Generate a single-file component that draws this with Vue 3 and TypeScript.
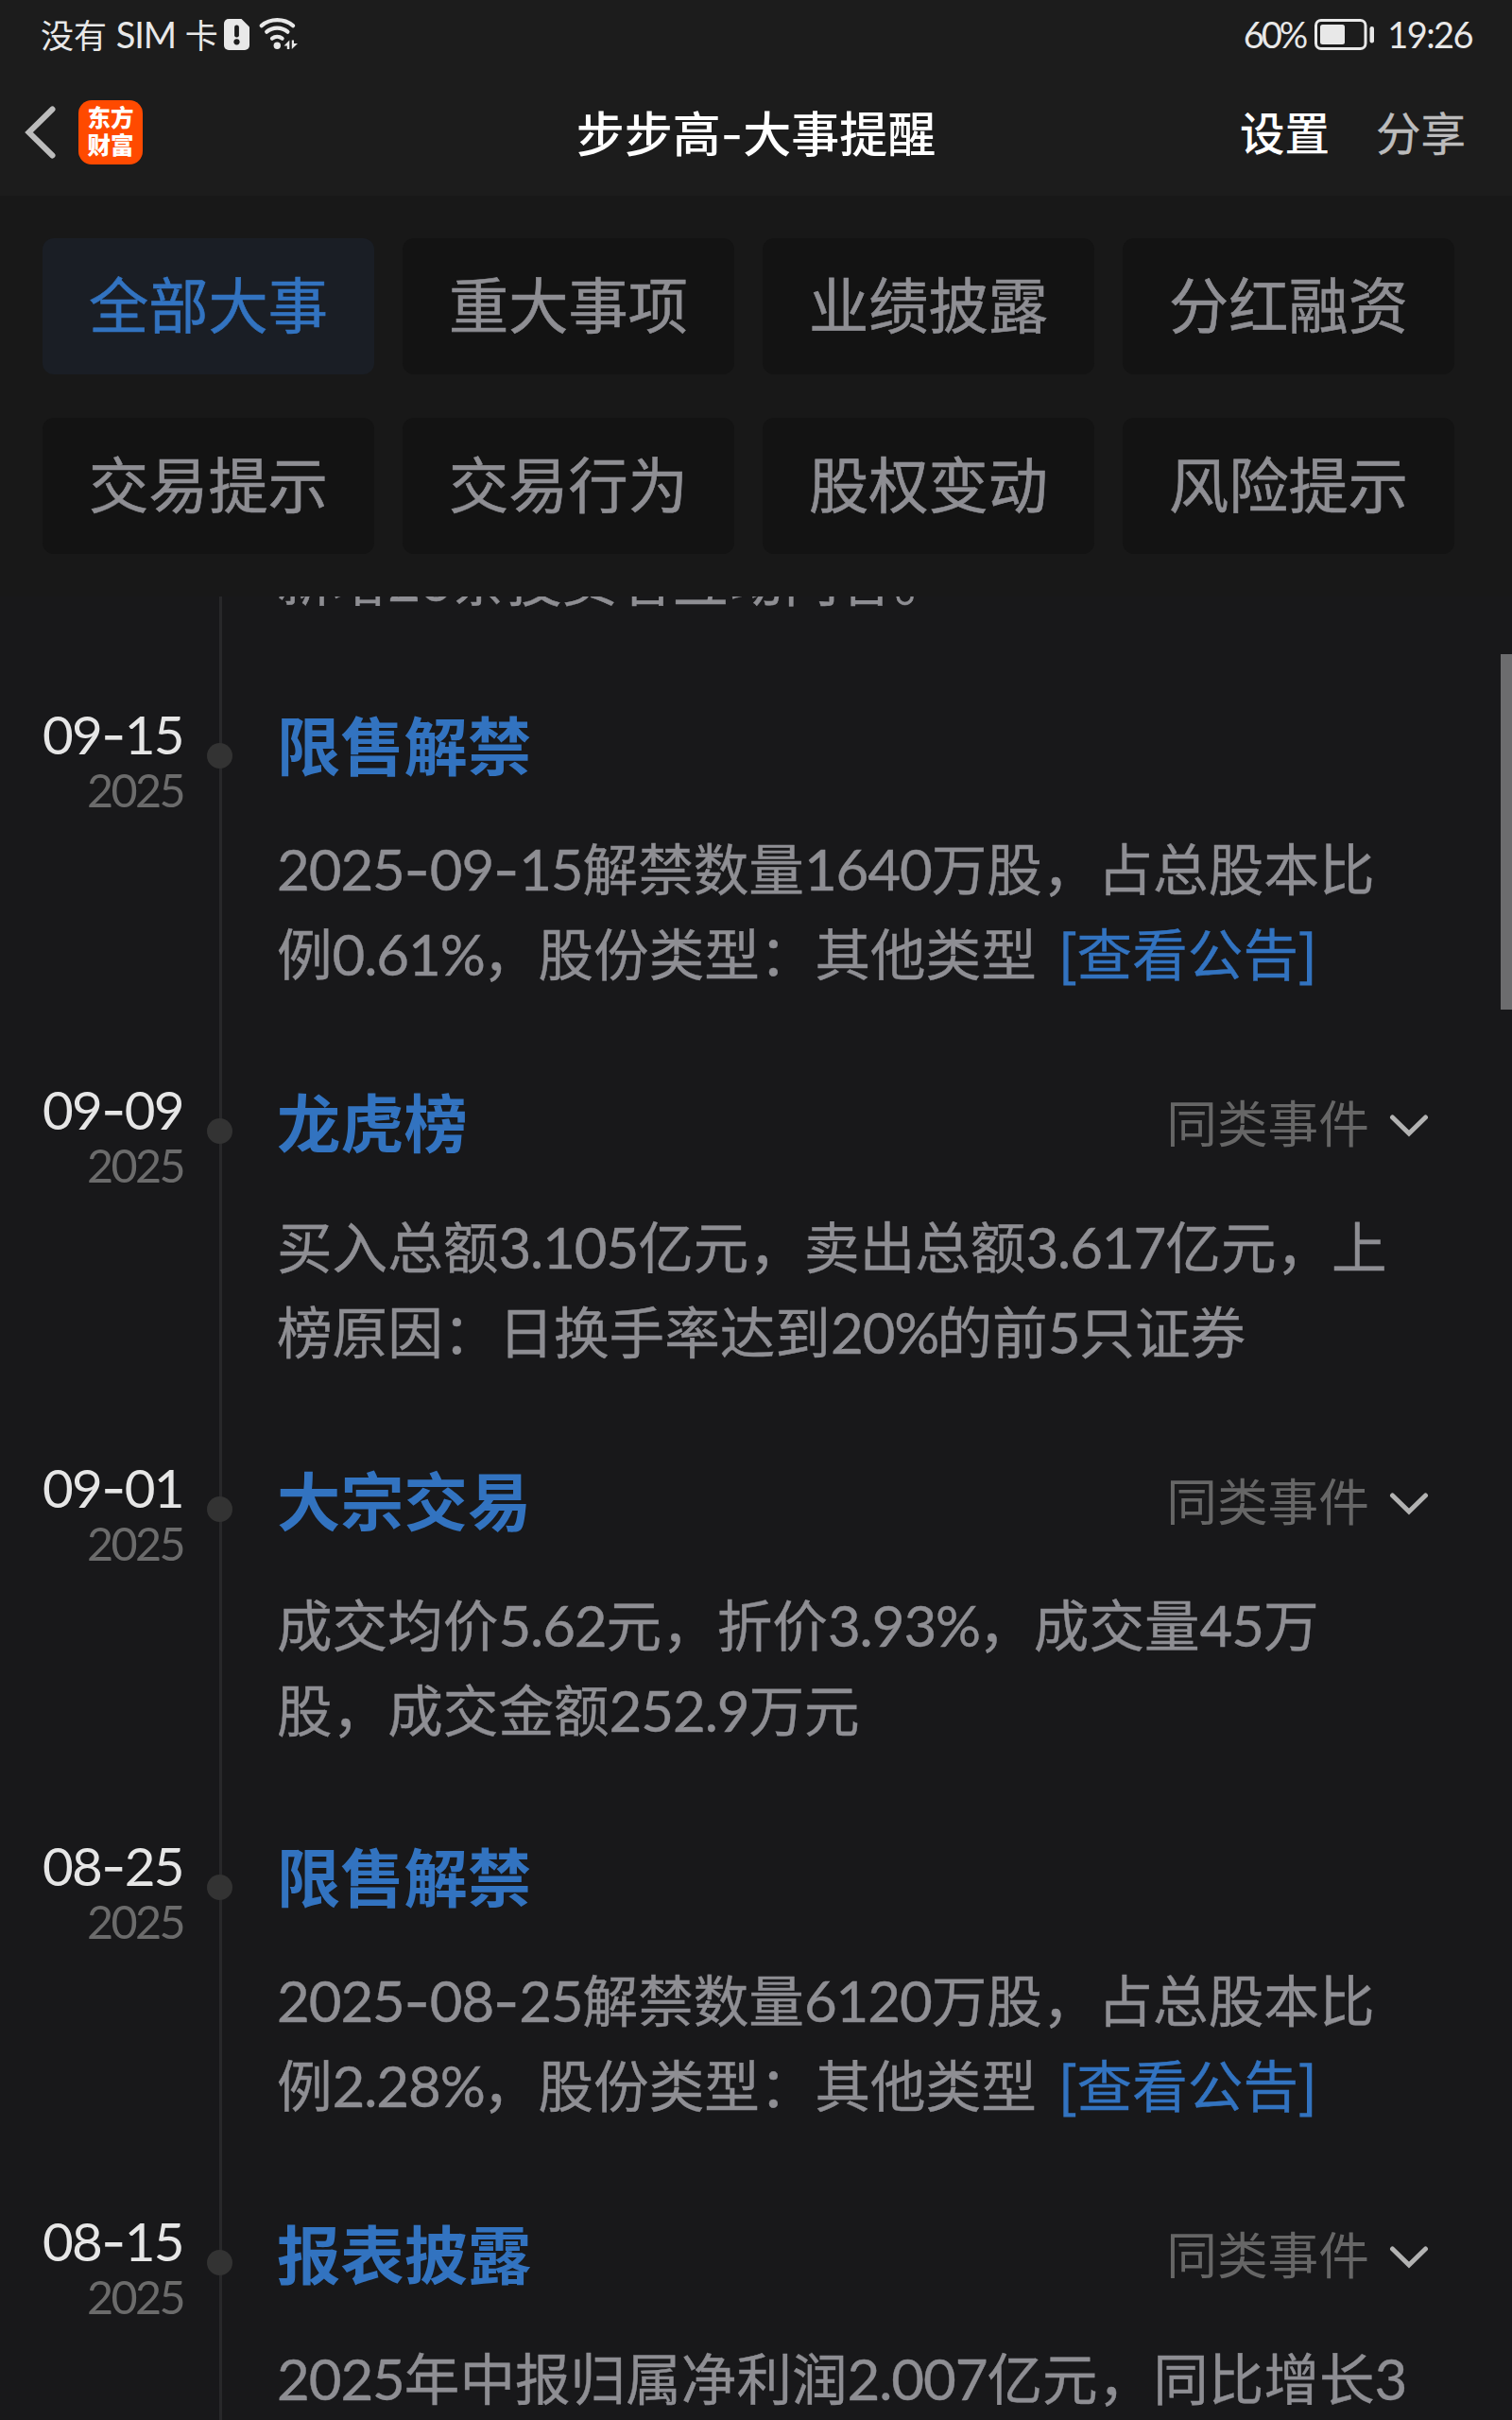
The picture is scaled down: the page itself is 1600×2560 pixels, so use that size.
<script setup lang="ts">
import { defineComponent, h } from 'vue'

interface EventItem {
  date: string
  year: string
  title: string
  lines: string[]
  link?: string
  similar?: boolean
}

const filters: string[] = [
  '全部大事', '重大事项', '业绩披露', '分红融资',
  '交易提示', '交易行为', '股权变动', '风险提示',
]
const activeFilter = '全部大事'

const events: EventItem[] = [
  {
    date: '09-15', year: '2025', title: '限售解禁',
    lines: ['2025-09-15解禁数量1640万股，占总股本比', '例0.61%，股份类型：其他类型'],
    link: '查看公告',
  },
  {
    date: '09-09', year: '2025', title: '龙虎榜', similar: true,
    lines: ['买入总额3.105亿元，卖出总额3.617亿元，上', '榜原因：日换手率达到20%的前5只证券'],
  },
  {
    date: '09-01', year: '2025', title: '大宗交易', similar: true,
    lines: ['成交均价5.62元，折价3.93%，成交量45万', '股，成交金额252.9万元'],
  },
  {
    date: '08-25', year: '2025', title: '限售解禁',
    lines: ['2025-08-25解禁数量6120万股，占总股本比', '例2.28%，股份类型：其他类型'],
    link: '查看公告',
  },
  {
    date: '08-15', year: '2025', title: '报表披露', similar: true,
    lines: ['2025年中报归属净利润2.007亿元，同比增长3'],
  },
]

// Splits mixed text so digits, hyphens and Chinese each get their own face.
const MixedText = defineComponent({
  props: { text: { type: String, required: true } },
  setup(props) {
    return () =>
      h('span', (props.text.match(/-|%|[0-9.:A-Za-z]+|[^-0-9.%:A-Za-z]+/g) ?? []).map((run) => {
        if (run === '-') return h('span', { class: 'run-dash' }, run)
        if (run === '%') return h('span', { class: 'run-num run-pct' }, run)
        if (/^[0-9.:A-Za-z]/.test(run)) return h('span', { class: 'run-num' }, run)
        return h('span', run)
      }))
  },
})
</script>

<template>
  <div class="screen">
    <header class="header">
      <div class="status">
        <div class="status-left">
          <span class="carrier"><MixedText text="没有 SIM 卡" /></span>
          <svg class="sim" width="27" height="33" viewBox="0 0 27 33">
            <path d="M5 0H18.5L27 8.5V28a5 5 0 0 1-5 5H5a5 5 0 0 1-5-5V5a5 5 0 0 1 5-5z" fill="#e8e8e8" />
            <path d="M13.5 8.8v8.4" stroke="#1c1c1c" stroke-width="4.8" stroke-linecap="round" />
            <circle cx="13.5" cy="24.3" r="3.1" fill="#1c1c1c" />
          </svg>
          <svg class="wifi" width="42" height="34" viewBox="0 0 42 34">
            <g fill="none" stroke="#e8e8e8" stroke-width="4.2" stroke-linecap="round">
              <path d="M2.8 8.2C12 .2 26.5 .2 36 8.2" />
              <path d="M8.2 14.7c6.3-5.4 15.800-5.400 22.200 0" />
              <path d="M14 21.6c3.2-2.500 7.400-2.500 10.600 0" />
            </g>
            <circle cx="19.3" cy="29.2" r="3.700" fill="#e8e8e8" />
            <path d="M32.300 23.500v9.500h-2.500v-3.500h-3.300z M34.800 33v-9.500h2.200v3.500h4z" fill="#e8e8e8" />
          </svg>
        </div>
        <div class="status-right">
          <span class="latin percent">60%</span>
          <svg class="battery" width="63" height="33" viewBox="0 0 63 33">
            <rect x="1.5" y="1.5" width="52.5" height="30" rx="5.5" fill="none" stroke="#e8e8e8" stroke-width="3" />
            <rect x="6" y="6" width="26" height="21" rx="2.500" fill="#e8e8e8" />
            <rect x="58.5" y="8" width="4.5" height="17.5" rx="2.2" fill="#e8e8e8" />
          </svg>
          <span class="latin clock">19:26</span>
        </div>
      </div>
      <nav class="nav">
        <div class="nav-side">
          <svg class="back" width="34" height="58" viewBox="0 0 34 58">
            <path d="M29.5 4.5 4.500 29l25 24.500" fill="none" stroke="#bcbcbc" stroke-width="6" stroke-linecap="round" />
          </svg>
          <div class="logo"><span>东方</span><span>财富</span></div>
        </div>
        <h1 class="nav-title"><MixedText text="步步高-大事提醒" /></h1>
        <div class="nav-side nav-actions">
          <span class="settings">设置</span>
          <span class="share">分享</span>
        </div>
      </nav>
    </header>

    <section class="filters">
      <button v-for="name in filters" :key="name" class="chip" :class="{ active: name === activeFilter }">
        {{ name }}
      </button>
    </section>

    <main class="list">
      <article class="event previous">
        <div class="when"></div>
        <div class="rail"></div>
        <div class="body"><p class="line"><MixedText text="新增20条投资者互动内容。" /></p></div>
      </article>
      <article v-for="item in events" :key="item.date" class="event" :class="{ grouped: item.similar }">
        <div class="when">
          <div class="date"><MixedText :text="item.date" /></div>
          <div class="year">{{ item.year }}</div>
        </div>
        <div class="rail"><i class="dot"></i></div>
        <div class="body">
          <div class="heading">
            <h2>{{ item.title }}</h2>
            <div v-if="item.similar" class="similar">
              <span>同类事件</span>
              <svg width="42" height="26" viewBox="0 0 42 26">
                <path d="M3.5 4 21 21 38.5 4" fill="none" stroke="#b2b2b2" stroke-width="5" stroke-linecap="round" />
              </svg>
            </div>
          </div>
          <p v-for="(line, i) in item.lines" :key="i" class="line">
            <MixedText :text="line" /><a v-if="item.link && i === item.lines.length - 1" class="link"><span class="bracket">[</span>{{ item.link }}<span class="bracket">]</span></a>
          </p>
        </div>
      </article>
      <div class="scrollbar"></div>
    </main>
  </div>
</template>

<style>
body {
  background: #18181a;
}
</style>

<style scoped>
.screen {
  width: 1600px;
  height: 2560px;
  overflow: hidden;
  display: flex;
  flex-direction: column;
  background: #18181a;
  color: #8e8e93;
  font-family: "Noto Sans CJK SC", sans-serif;
}
.screen :deep(.run-num),
.latin {
  font-family: Lato, sans-serif;
  line-height: 1;
}
.screen :deep(.run-dash) {
  font-family: Inter, sans-serif;
  line-height: 1;
}
.header {
  height: 207px;
  flex: none;
  background: #1c1c1c;
}
.status {
  height: 72px;
  padding: 0 42px 0 43px;
  display: flex;
  justify-content: space-between;
  color: #e8e8e8;
  font-size: 35px;
}
.status-left,
.status-right {
  display: flex;
  align-items: center;
}
.carrier {
  line-height: 72px;
  width: 194px;
  white-space: pre;
  word-spacing: 2px;
}
.carrier :deep(.run-num) {
  font-size: 38px;
  letter-spacing: -1.2px;
}
.wifi {
  margin-left: 10px;
}
.latin {
  font-size: 38px;
  letter-spacing: -1.6px;
  line-height: 76px;
}
.percent {
  letter-spacing: -3px;
}
.battery {
  margin-left: 10px;
}
.clock {
  margin-left: 14px;
}
.nav {
  height: 135px;
  display: flex;
  align-items: center;
  justify-content: space-between;
}
.nav-side {
  width: 420px;
  height: 135px;
  display: flex;
  align-items: center;
}
.back {
  margin: 0 23px 0 26px;
}
.logo {
  width: 68px;
  height: 68px;
  border-radius: 14px;
  background: #ff4a00;
  color: #fff;
  display: flex;
  flex-direction: column;
  align-items: center;
  justify-content: center;
  font-size: 24.5px;
  font-weight: 900;
  line-height: 29px;
  padding-bottom: 4px;
  box-sizing: border-box;
}
.nav-title {
  margin: 0;
  padding-bottom: 2px;
  font-size: 51px;
  line-height: 76px;
  font-weight: 500;
  color: #fff;
  white-space: nowrap;
}
.nav-title :deep(.run-dash) {
  font-weight: 400;
}
.nav-actions {
  justify-content: flex-end;
  gap: 49px;
  padding: 0 49px 2px 0;
  box-sizing: border-box;
  font-size: 47.5px;
  line-height: 70px;
}
.settings {
  color: #fff;
  font-weight: 500;
}
.share {
  color: #bcbcbc;
  -webkit-text-stroke: 0.4px currentColor;
}
.filters {
  height: 424px;
  flex: none;
  box-sizing: border-box;
  padding: 45px 61px 45px 45px;
  display: grid;
  grid-template-columns: repeat(4, 351px);
  grid-auto-rows: 144px;
  gap: 46px 30px;
  background: #181818;
}
.chip {
  border: 0;
  border-radius: 12px;
  padding: 0 0 8px;
  background: #131313;
  color: #8e8e93;
  font: 400 63.2px/1.4 "Noto Sans CJK SC", sans-serif;
  white-space: nowrap;
  -webkit-text-stroke: 0.6px currentColor;
}
.chip.active {
  background: #1a1e25;
  color: #3273c0;
}
.list {
  position: relative;
  height: 1929px;
  overflow: hidden;
}
.event {
  height: 397px;
  display: flex;
}
.event.grouped {
  height: 400px;
}
.event.previous {
  height: 176px;
  margin-top: -67px;
}
.when {
  width: 194px;
  box-sizing: border-box;
  padding-top: 6px;
  text-align: right;
  font-family: Lato, sans-serif;
  white-space: nowrap;
}
.date {
  font-size: 56.5px;
  line-height: 60px;
  letter-spacing: -1.6px;
  color: #e6e6e6;
}
.year {
  font-size: 48.5px;
  line-height: 56px;
  letter-spacing: -2.6px;
  color: #6b6b6b;
}
.rail {
  position: relative;
  width: 3px;
  margin-left: 38px;
  background: #28282a;
}
.dot {
  position: absolute;
  left: -13px;
  top: 46px;
  width: 27px;
  height: 27px;
  border-radius: 50%;
  background: #333;
}
.body {
  width: 1277px;
  margin-left: 58px;
  padding-top: 1px;
}
.grouped .body {
  padding-top: 3px;
}
.heading {
  height: 90px;
  margin-bottom: 41px;
  display: flex;
  justify-content: space-between;
  padding-right: 58px;
}
.grouped .heading {
  margin-bottom: 42px;
}
h2 {
  margin: 0;
  font-size: 67.3px;
  line-height: 90px;
  font-weight: 700;
  color: #3273c0;
}
.similar {
  display: flex;
  align-items: center;
  gap: 21px;
  height: 92px;
  font-size: 53.7px;
  line-height: 92px;
  color: #666;
}
.similar svg {
  margin-top: 9px;
}
.line {
  margin: 0;
  height: 90px;
  font-size: 58.6px;
  line-height: 90px;
  white-space: nowrap;
  -webkit-text-stroke: 0.4px currentColor;
}
.previous .line {
  padding-top: 1px;
}
.line :deep(.run-num) {
  font-size: 60px;
  letter-spacing: -1.1px;
}
.line :deep(.run-pct) {
  letter-spacing: -3px;
}
.link {
  margin-left: 23px;
  color: #3273c0;
}
.bracket {
  line-height: 1;
  -webkit-text-stroke: 1.2px currentColor;
}
.scrollbar {
  position: absolute;
  right: 0;
  top: 61px;
  width: 12px;
  height: 376px;
  background: #6c6c6e;
}
</style>
